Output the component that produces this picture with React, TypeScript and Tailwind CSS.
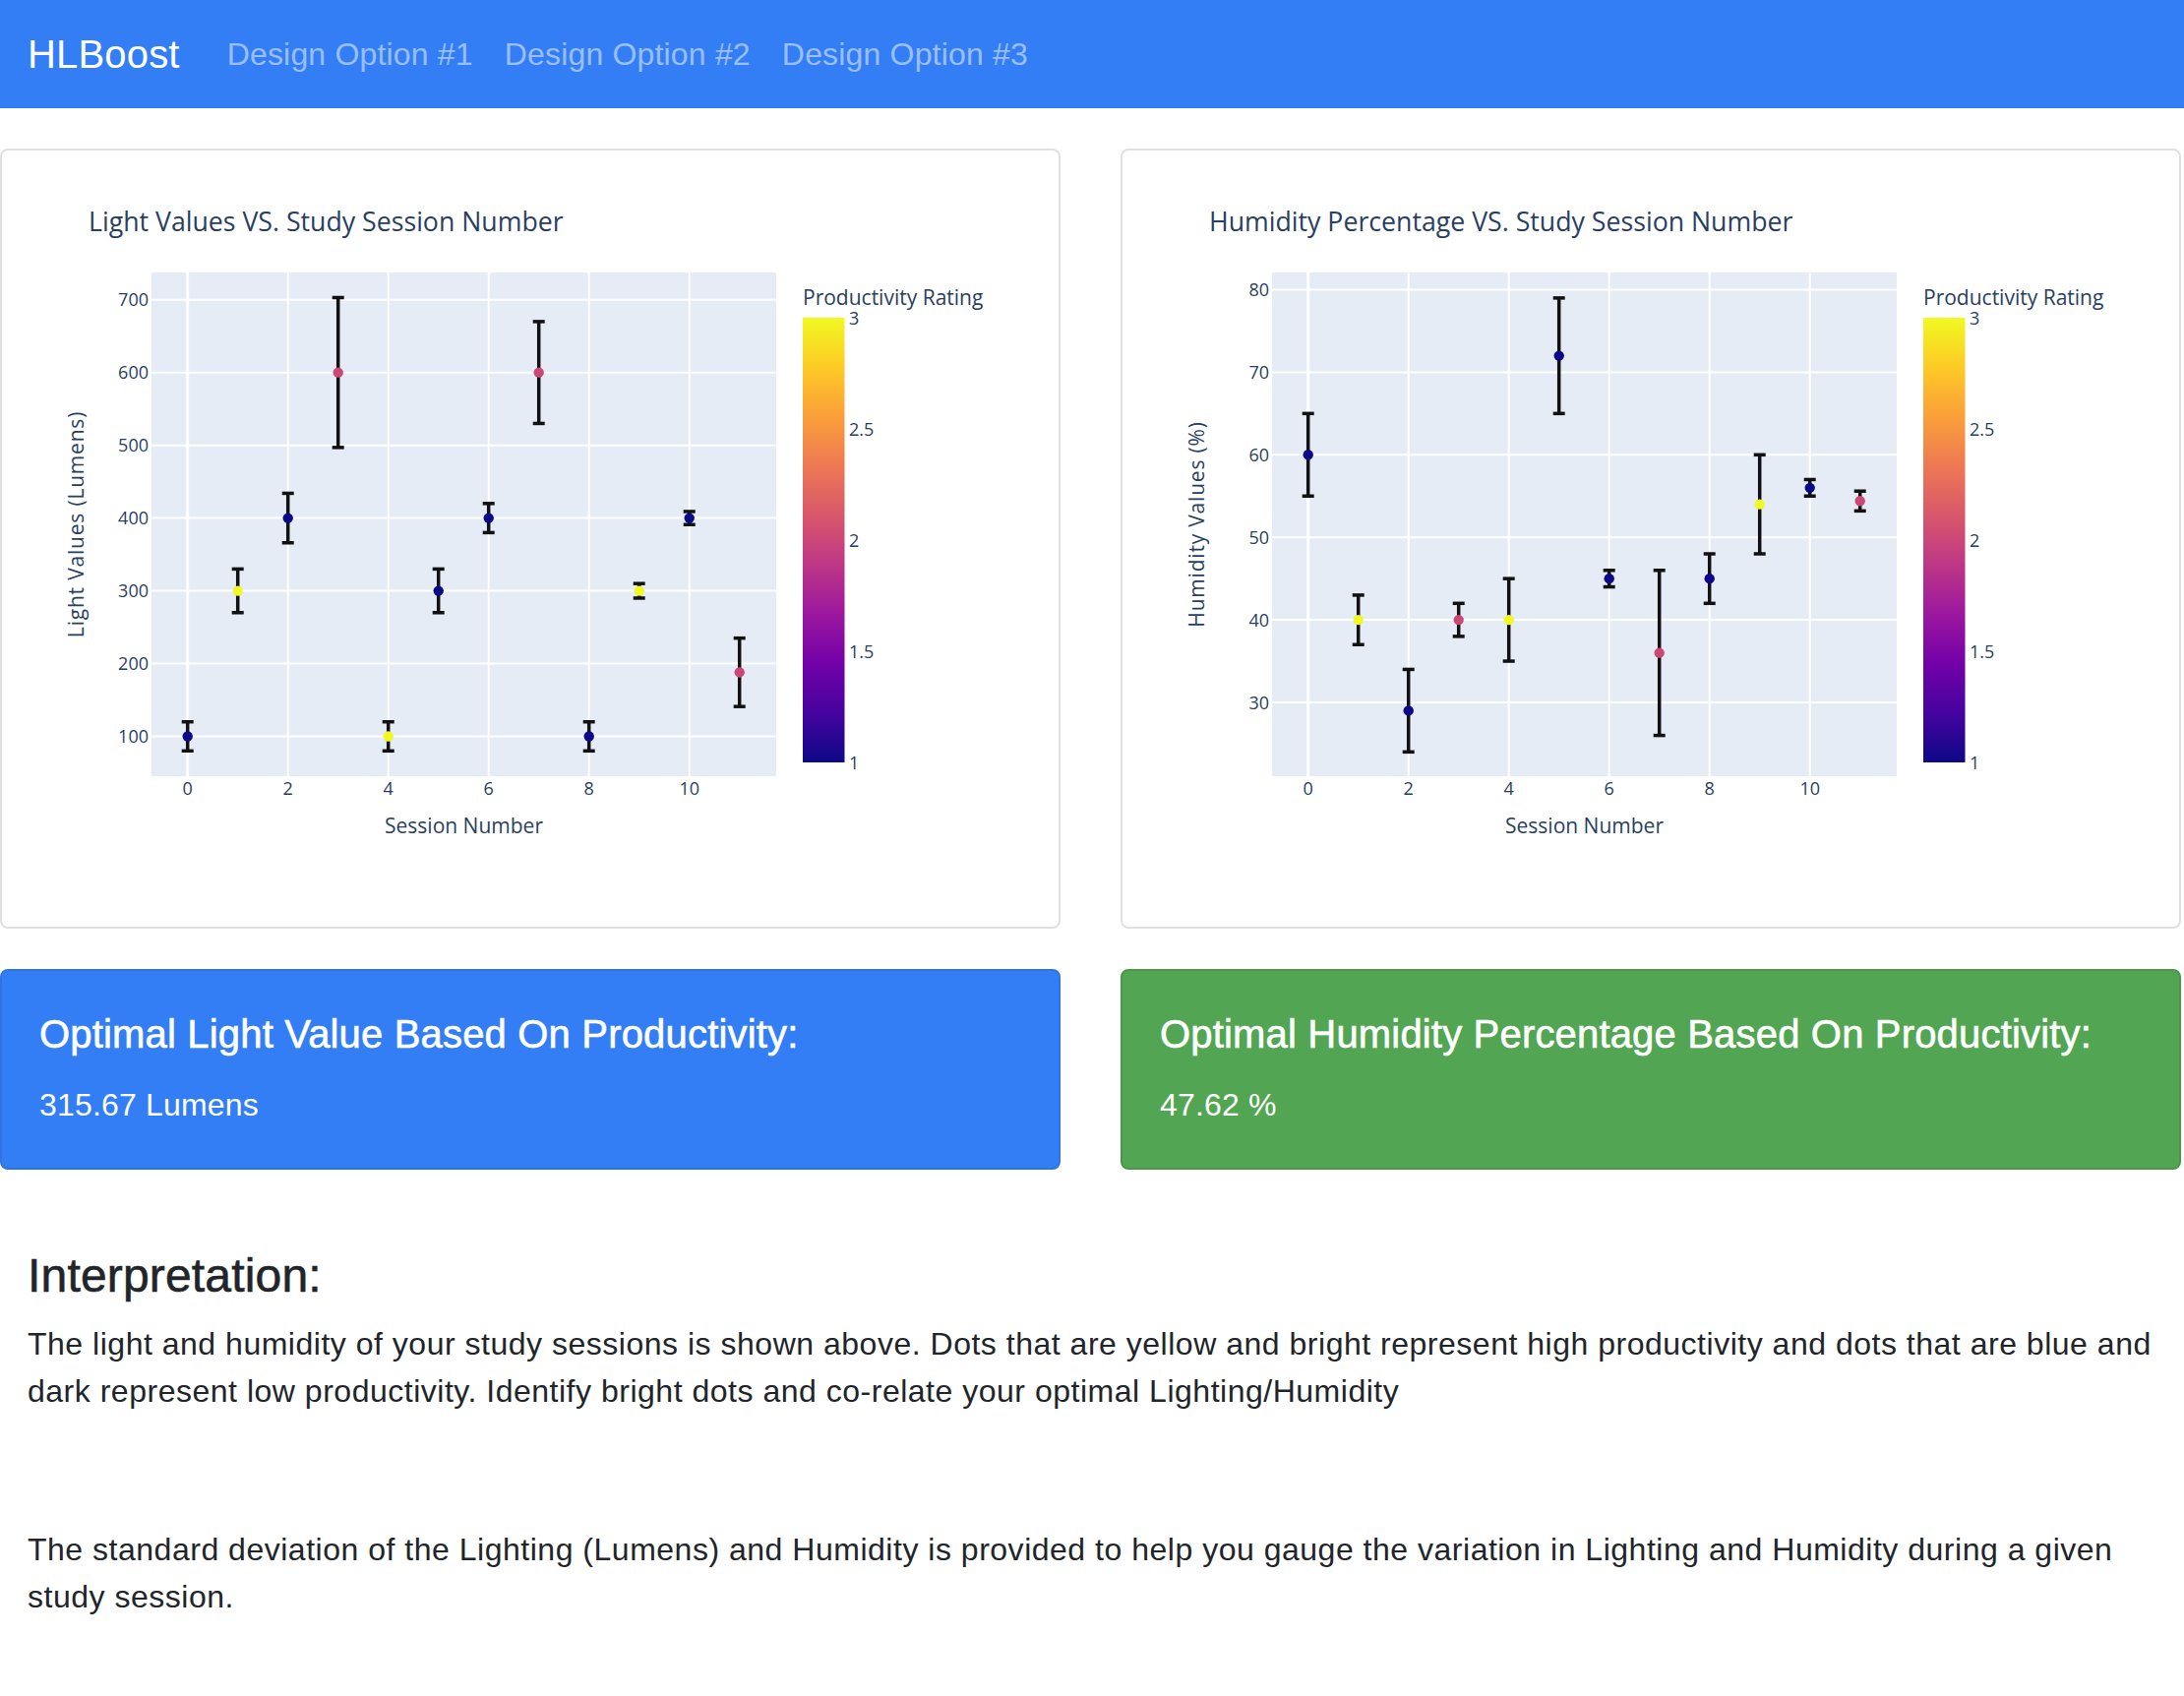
const PLASMA = ['#0d0887', '#46039f', '#7201a8', '#9c179e', '#bd3786', '#d8576b', '#ed7953', '#fb9f3a', '#fdca26', '#f0f921']
const RATING: Record<number, string> = { 1: '#0d0887', 2: '#cc4778', 3: '#f0f921' }

type Point = [number, number, number]

const lightData: Point[] = [
  [100, 20, 1], [300, 30, 3], [400, 34, 1], [600, 103, 2], [100, 20, 3], [300, 30, 1],
  [400, 20, 1], [600, 70, 2], [100, 20, 1], [300, 10, 3], [400, 9, 1], [188, 47, 2],
]

const humidityData: Point[] = [
  [60, 5, 1], [40, 3, 3], [29, 5, 1], [40, 2, 2], [40, 5, 3], [72, 7, 1],
  [45, 1, 1], [36, 10, 2], [45, 3, 1], [54, 6, 3], [56, 1, 1], [54.4, 1.2, 2],
]

const xOf = (s: number) => 190.7 + 51 * s

interface ChartProps {
  id: string
  title: string
  yTitle: string
  yTicks: number[]
  yOf: (v: number) => number
  points: Point[]
}

function Chart({ id, title, yTitle, yTicks, yOf, points }: ChartProps) {
  return (
    <svg width={1074} height={789} viewBox="2 153 1074 789" className="block font-['Open_Sans',Verdana,sans-serif]">
      <defs>
        <linearGradient id={id} x1="0" y1="1" x2="0" y2="0">
          {PLASMA.map((c, i) => (
            <stop key={c} offset={i / 9} stopColor={c} />
          ))}
        </linearGradient>
      </defs>
      <text x={90} y={235} fontSize={26.7} fill="#2a3f5f">{title}</text>

      <rect x={154} y={277} width={635} height={512} fill="#e5ecf6" />
      {yTicks.map((t) => (
        <line key={t} x1={154} x2={789} y1={yOf(t)} y2={yOf(t)} stroke="#fff" strokeWidth={2} />
      ))}
      {[0, 2, 4, 6, 8, 10].map((t) => (
        <line key={t} x1={xOf(t)} x2={xOf(t)} y1={277} y2={789} stroke="#fff" strokeWidth={t === 0 ? 3 : 2} />
      ))}

      {yTicks.map((t) => (
        <text key={t} x={151} y={yOf(t) + 6.5} fontSize={18} textAnchor="end" fill="#2a3f5f">{t}</text>
      ))}
      {[0, 2, 4, 6, 8, 10].map((t) => (
        <text key={t} x={xOf(t)} y={807.5} fontSize={18} textAnchor="middle" fill="#2a3f5f">{t}</text>
      ))}
      <text x={471.5} y={847} fontSize={21} textAnchor="middle" fill="#2a3f5f">Session Number</text>
      <text x={85} y={533} fontSize={21} letterSpacing={0.8} textAnchor="middle" fill="#2a3f5f" transform="rotate(-90 85 533)">
        {yTitle}
      </text>

      {points.map(([v, e], i) => {
        const x = xOf(i)
        const top = yOf(v + e)
        const bottom = yOf(v - e)
        return (
          <g key={i} stroke="#111" strokeWidth={3.5}>
            <line x1={x} x2={x} y1={top} y2={bottom} />
            <line x1={x - 6} x2={x + 6} y1={top} y2={top} />
            <line x1={x - 6} x2={x + 6} y1={bottom} y2={bottom} />
          </g>
        )
      })}
      {points.map(([v, , r], i) => (
        <circle key={i} cx={xOf(i)} cy={yOf(v)} r={5.2} fill={RATING[r]} />
      ))}

      <text x={816} y={310} fontSize={21} fill="#2a3f5f">Productivity Rating</text>
      <rect x={816} y={323} width={42.5} height={452} fill={`url(#${id})`} />
      {['3', '2.5', '2', '1.5', '1'].map((l, k) => (
        <text key={l} x={863} y={323 + k * 113 + 6.5} fontSize={18} fill="#2a3f5f">{l}</text>
      ))}
    </svg>
  )
}

const links = ['Design Option #1', 'Design Option #2', 'Design Option #3']

export default function App() {
  return (
    <div className="min-h-[1724px] bg-white font-['Liberation_Sans',Arial,sans-serif] tracking-[0.011em] text-[#212529]">
      <nav className="flex h-[110px] items-center bg-[#337ef5] px-[28px]">
        <span className="mr-[32px] text-[40px] leading-[60px] text-white">HLBoost</span>
        <div className="flex">
          {links.map((l) => (
            <a key={l} className="px-[16px] text-[32px] leading-[48px] text-white/50">{l}</a>
          ))}
        </div>
      </nav>

      <div className="mt-[41px] grid grid-cols-[1078px_1078px] gap-x-[61px] tracking-normal">
        <div className="h-[793px] overflow-hidden rounded-[8px] border-2 border-[#e0e0e0]">
          <Chart
            id="light"
            title="Light Values VS. Study Session Number"
            yTitle="Light Values (Lumens)"
            yTicks={[100, 200, 300, 400, 500, 600, 700]}
            yOf={(v) => 304.7 + (700 - v) * 0.7397}
            points={lightData}
          />
        </div>
        <div className="h-[793px] overflow-hidden rounded-[8px] border-2 border-[#e0e0e0]">
          <Chart
            id="humidity"
            title="Humidity Percentage VS. Study Session Number"
            yTitle="Humidity Values (%)"
            yTicks={[30, 40, 50, 60, 70, 80]}
            yOf={(v) => 294.5 + (80 - v) * 8.39}
            points={humidityData}
          />
        </div>
      </div>

      <div className="mt-[41px] grid grid-cols-[1078px_1078px] gap-x-[61px]">
        <div className="rounded-[8px] border-2 border-[#2f74e6] bg-[#337ef5] px-[38px] py-[40px] text-white">
          <h5 className="mb-[24px] text-[40px] leading-[48px] [-webkit-text-stroke:0.6px_white]">
            Optimal Light Value Based On Productivity:
          </h5>
          <p className="text-[32px] leading-[48px]">315.67 Lumens</p>
        </div>
        <div className="rounded-[8px] border-2 border-[#4a974a] bg-[#52a552] px-[38px] py-[40px] text-white">
          <h5 className="mb-[24px] text-[40px] leading-[48px] [-webkit-text-stroke:0.6px_white]">
            Optimal Humidity Percentage Based On Productivity:
          </h5>
          <p className="text-[32px] leading-[48px]">47.62 %</p>
        </div>
      </div>

      <div className="px-[28px] pb-[60px]">
        <h4 className="mt-[79px] mb-[16px] text-[48px] leading-[58px] [-webkit-text-stroke:0.6px_#212529]">Interpretation:</h4>
        <p className="text-[32px] leading-[48px] tracking-[0.016em]">
          The light and humidity of your study sessions is shown above. Dots that are yellow and bright represent high
          productivity and dots that are blue and dark represent low productivity. Identify bright dots and co-relate your
          optimal Lighting/Humidity
        </p>
        <p className="mt-[113px] text-[32px] leading-[48px] tracking-[0.016em]">
          The standard deviation of the Lighting (Lumens) and Humidity is provided to help you gauge the variation in
          Lighting and Humidity during a given study session.
        </p>
      </div>
    </div>
  )
}
